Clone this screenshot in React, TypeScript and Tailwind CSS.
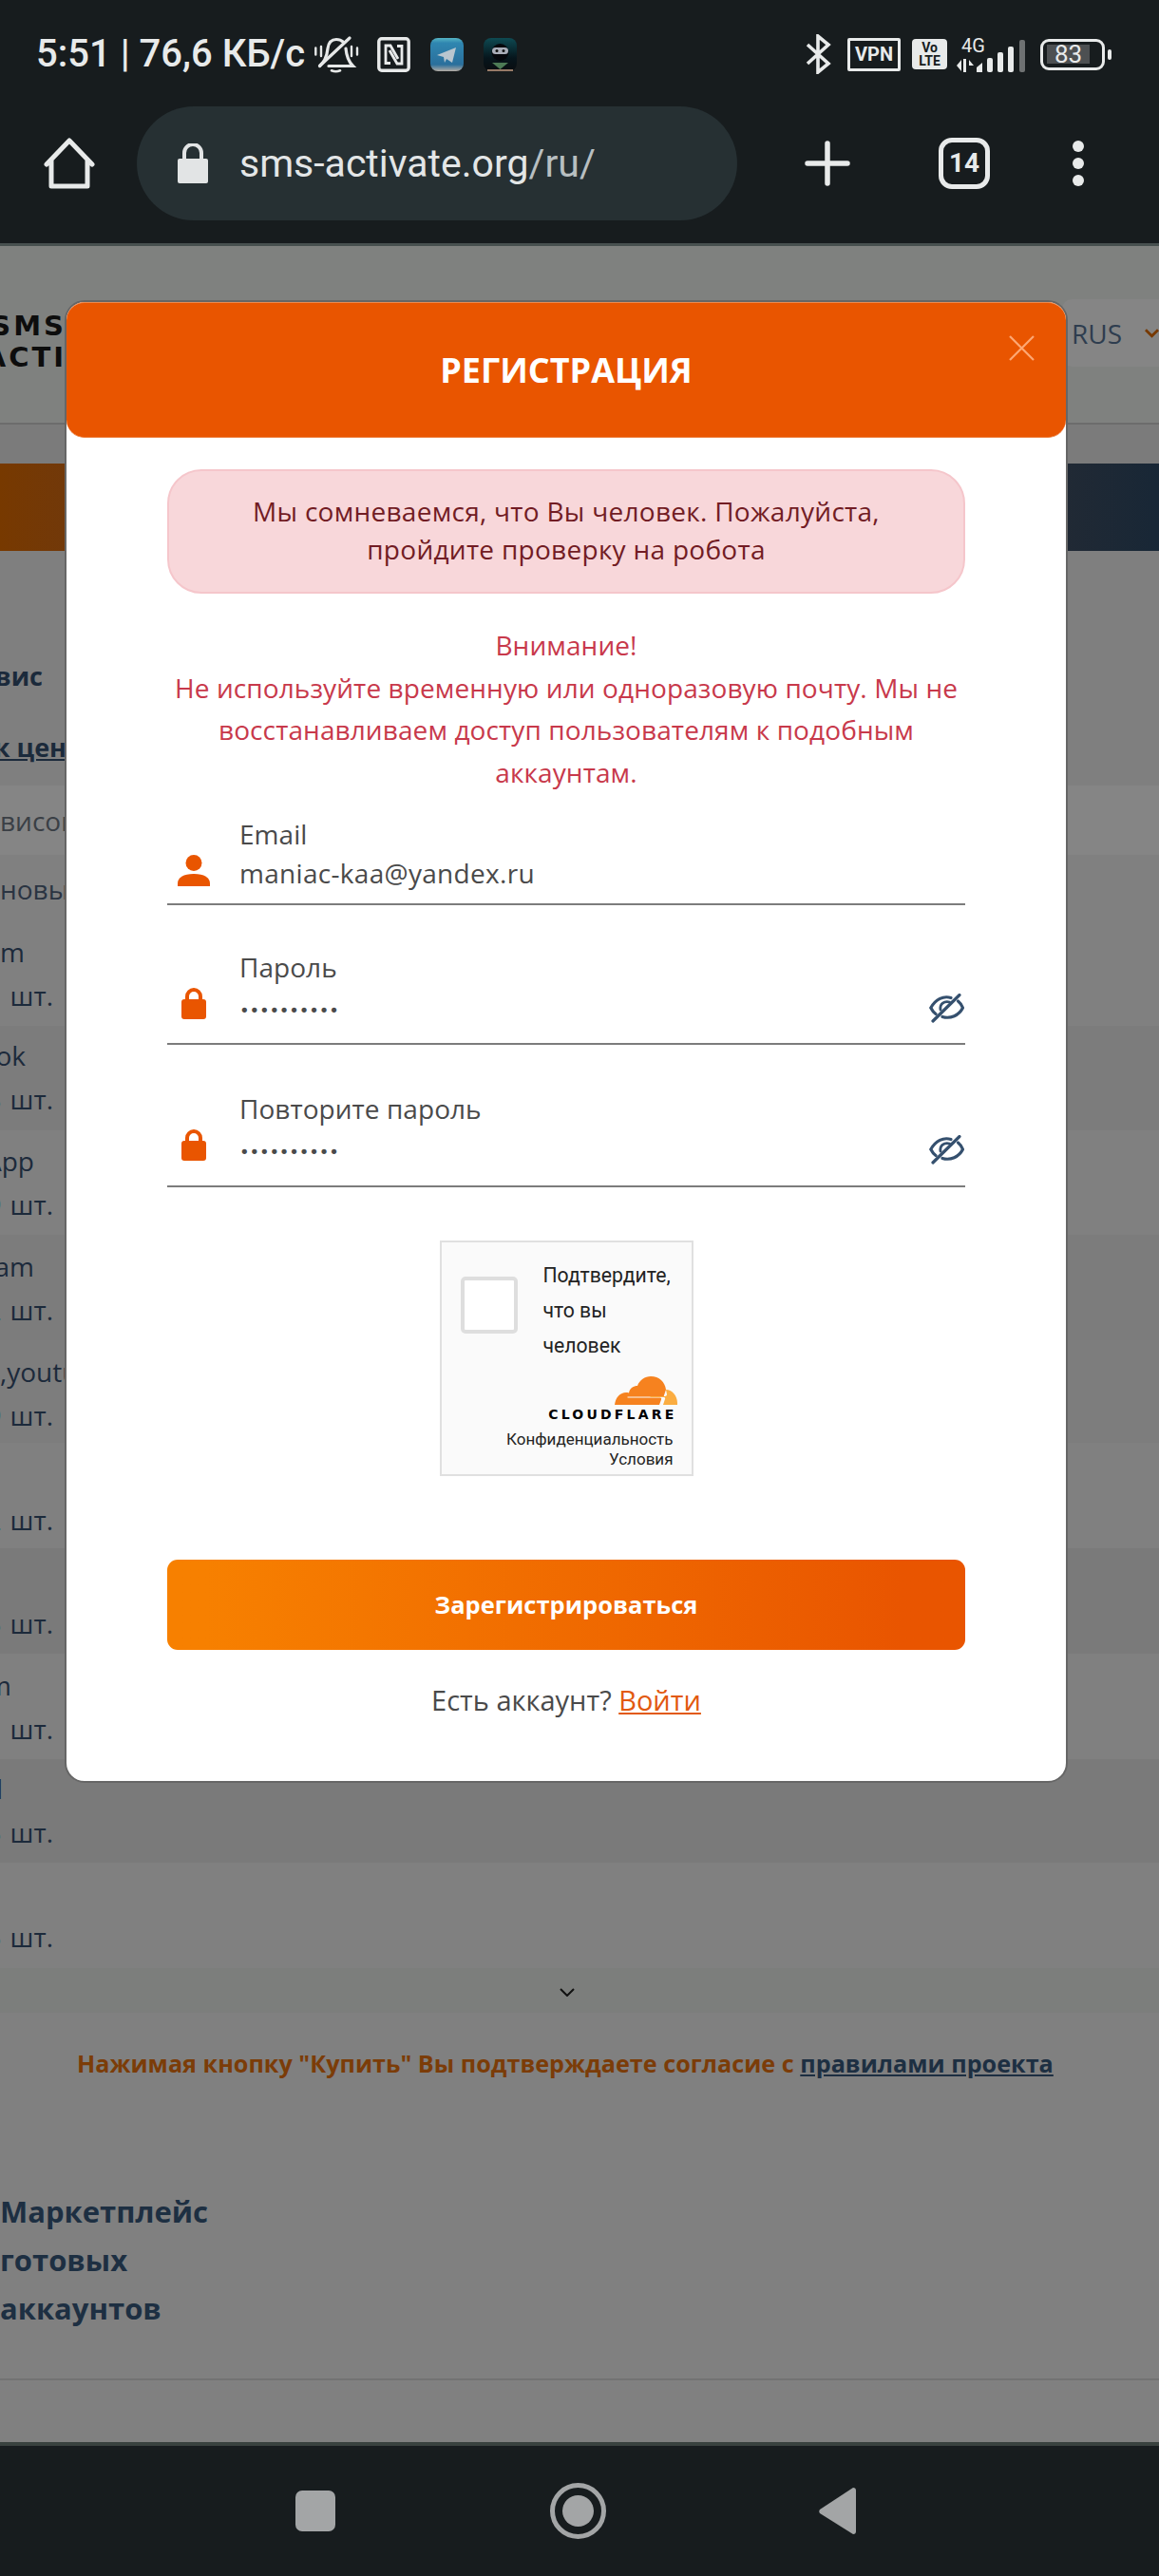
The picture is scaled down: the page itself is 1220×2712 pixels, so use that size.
import React from "react";

const rows = [
  { cls: "h-[108px] pb-[10px] bg-[#808080]", name: "Instagram", nameCls: "w-[26px] justify-end", num: "" },
  { cls: "h-[110px] pb-[11px] bg-[#7c7c7c]", name: "Facebook", nameCls: "w-[27px] justify-end", num: "3" },
  { cls: "h-[110px] pb-[10px] bg-[#808080]", name: "WhatsApp", nameCls: "w-[36px] justify-end", num: "9" },
  { cls: "h-[111px] pb-[10px] bg-[#7c7c7c]", name: "Telegram", nameCls: "w-[36px] justify-end", num: "2" },
  { cls: "h-[108px] pb-[7px] bg-[#7d7d7d]", name: ",youtube", nameCls: "w-[70px] justify-start", num: "9" },
  { cls: "h-[111px] pb-[8px] bg-[#808080]", name: "", nameCls: "", num: "2" },
  { cls: "h-[111px] pb-[10px] bg-[#7a7a7a]", name: "", nameCls: "", num: "5" },
  { cls: "h-[111px] pb-[10px] bg-[#808080]", name: "Steam", nameCls: "w-[12px] justify-end", num: "" },
  { cls: "h-[109px] pb-[10px] bg-[#7a7a7a]", name: "Mail", nameCls: "w-[3px] justify-end", num: "5" },
  { cls: "h-[111px] pb-[11px] bg-[#808080]", name: "", nameCls: "", num: "5" },
];

function BgRow({ r }: { r: (typeof rows)[number] }) {
  return (
    <div className={`flex flex-col justify-end text-[#1c2a3b] text-[28px] leading-[44px] ${r.cls}`}>
      {r.name ? <div className={`flex overflow-hidden whitespace-nowrap leading-[47px] ${r.nameCls}`}>{r.name}</div> : null}
      <div className="flex justify-end w-[56px] whitespace-nowrap">
        <span className="text-[#0c5a3e]">{r.num}</span>
        <span className="ml-[9px]">шт.</span>
      </div>
    </div>
  );
}

function BellOff() {
  return (
    <svg width="48" height="39" viewBox="0 0 48 39" fill="none" stroke="#e6e8e8" strokeWidth="3.2" strokeLinecap="round">
      <path d="M6.500 31.500C10 28 14 24 15 13 16 6 20 3.500 24 3.500c3 0 5 .500 7 2.500" />
      <path d="M34 13c1 11 4 15 7.500 18.500H16" />
      <path d="M38 2 7 31" />
      <path d="M19 36.300q4.500 2 9 0" strokeWidth="2.600" />
      <path d="M2.300 12.500v7M8 11v10M40 11v10M46 12.500v7" strokeWidth="2.400" />
    </svg>
  );
}

function Nfc() {
  return (
    <svg width="35" height="37" viewBox="0 0 35 37" fill="none" stroke="#e8eaea">
      <rect x="1.800" y="1.800" width="31.400" height="33.400" rx="3" strokeWidth="3.400" />
      <path d="M14 27.500H9V9h5l8 14" strokeWidth="2.800" />
      <path d="M21 9.500h5V28h-5l-8-14" strokeWidth="2.800" />
    </svg>
  );
}

function Telegram() {
  return (
    <svg width="35" height="35" viewBox="0 0 35 35">
      <defs>
        <linearGradient id="tg" x1="0" y1="0" x2="0" y2="1">
          <stop offset="0" stopColor="#55b4c4" />
          <stop offset="0.15" stopColor="#2f86b0" />
          <stop offset="0.8" stopColor="#2a6f9c" />
          <stop offset="1" stopColor="#b4aca4" />
        </linearGradient>
      </defs>
      <rect width="35" height="35" rx="8" fill="url(#tg)" />
      <path d="M7 18 27 10 23 26 17 22 15 26 14 20Z" fill="#b9c6cf" />
    </svg>
  );
}

function Ninja() {
  return (
    <svg width="35" height="35" viewBox="0 0 35 35">
      <defs>
        <linearGradient id="nj" x1="0" y1="0" x2="0" y2="1">
          <stop offset="0" stopColor="#0e4a52" />
          <stop offset="0.6" stopColor="#06151c" />
          <stop offset="1" stopColor="#0a0d10" />
        </linearGradient>
      </defs>
      <rect width="35" height="35" rx="8" fill="url(#nj)" />
      <circle cx="17.500" cy="15" r="9" fill="#05070c" />
      <rect x="9" y="10" width="17" height="7" rx="3.500" fill="#a9adb8" />
      <circle cx="14" cy="13.500" r="1.500" fill="#111" />
      <circle cx="21" cy="13.500" r="1.500" fill="#111" />
      <path d="M9 26h17l-8.500 7Z" fill="#4c7a55" />
      <path d="M4 34h27" stroke="#c79f85" strokeWidth="1.500" />
    </svg>
  );
}

function Bluetooth() {
  return (
    <svg width="27" height="42" viewBox="0 0 27 42" fill="none" stroke="#e8eaea" strokeWidth="3.600" strokeLinejoin="miter">
      <path d="M2 11 24 31 13 40V2L24 11 2 31" />
    </svg>
  );
}

function Signal() {
  return (
    <svg width="73" height="35" viewBox="0 0 73 35" fill="#e8eaea">
      <path d="M0 27 5 21V33ZM7 20V34H10V20ZM13 21 18 27 13 27Z" />
      <path d="M21 29 27 24V34H21Z" />
      <rect x="32" y="19" width="6" height="15" rx="2" />
      <rect x="43" y="13" width="6" height="21" rx="2" />
      <rect x="54" y="7" width="6" height="27" rx="2" />
      <rect x="66" y="0" width="6" height="34" rx="2" fill="#6e7172" />
    </svg>
  );
}

function PersonIcon() {
  return (
    <svg width="34" height="33" viewBox="0 0 34 33" fill="#e95500">
      <circle cx="17" cy="8.500" r="8.500" />
      <path d="M0 33V30C0 24 6 20 17 20s17 4 17 10v3Z" />
    </svg>
  );
}

function LockIcon() {
  return (
    <svg width="26" height="33" viewBox="0 0 26 33">
      <rect x="0" y="12" width="26" height="21" rx="3" fill="#e95500" />
      <path d="M6 14V9a7 7 0 0 1 14 0v5" fill="none" stroke="#e95500" strokeWidth="4" />
    </svg>
  );
}

function EyeOff() {
  return (
    <svg width="37" height="31" viewBox="0 0 37 31" fill="none" stroke="#35506e" strokeWidth="3.200" strokeLinecap="round">
      <path d="M23 4.500C15 2 7 6 1.800 15c1.500 3 3 5 5.200 6.500" />
      <path d="M30.500 8c2.500 2 4 4.500 5 7-4 8-13 12-21.500 9.500" />
      <path d="M12 17c-1-6 4-9.500 9.500-8" strokeWidth="2.800" />
      <path d="M32 1.500 4 29" />
    </svg>
  );
}

function CloudLogo() {
  return (
    <svg width="66" height="30" viewBox="0 0 66 30">
      <path d="M0 30C1 22 6 17 12 17c1 0 2 0 3 .500C16 12 20 10 24 10c2-6 8-10 14-10 9 0 15 6 16 14l-2 6c0 1-1 1.500-2 1.500H14c-1 0-1 1 0 1h34c1 0 1.500 1 1 2l-2 5.500Z" fill="#f6821f" />
      <path d="M54 14c6 0 12 6 12 14v2H51l2-6c.500-1 0-2-1-2H38c-1 0-1-1 0-1h15c1 0 2-1 2-2Z" fill="#fbad41" />
    </svg>
  );
}

function Field({ label, value, icon, eye, rowH }: { label: string; value: string; icon: React.ReactNode; eye?: boolean; rowH: string }) {
  return (
    <div className="flex flex-col border-b-2 border-[#7c7c7c]">
      <div className="pl-[76px] text-[28px] leading-[40px] tracking-[0.05px] text-[#4a4a4a]">{label}</div>
      <div className={`flex items-start ${rowH}`}>
        <div className="w-[76px] mt-[2px] flex justify-center pr-[20px]">{icon}</div>
        {eye ? (
          <>
            <div className="flex-1 mt-[17px] text-[#4a4a4a] font-['DejaVu_Sans'] text-[18px] tracking-[-0.15px] leading-[18px]">••••••••••</div>
            <div className="mt-[8px] mr-[1px]"><EyeOff /></div>
          </>
        ) : (
          <div className="flex-1 mt-[1px] text-[28px] tracking-[0.3px] text-[#4a4a4a] leading-[40px]">{value}</div>
        )}
      </div>
    </div>
  );
}

export default function App() {
  return (
    <div className="relative w-[1220px] h-[2712px] overflow-hidden bg-[#808080] font-['Open_Sans',sans-serif]">
      {/* system + browser chrome */}
      <div className="h-[256px] bg-[#171c1e] flex flex-col font-['Roboto',sans-serif]">
        <div className="h-[112px] flex items-center pl-[38px] pr-[50px] pt-[2px]">
          <span className="text-[#e8eaea] text-[40px] font-medium leading-none whitespace-nowrap">5:51 | 76,6 КБ/с</span>
          <div className="ml-[9px]"><BellOff /></div>
          <div className="ml-[19px]"><Nfc /></div>
          <div className="ml-[21px]"><Telegram /></div>
          <div className="ml-[21px]"><Ninja /></div>
          <div className="ml-auto"><Bluetooth /></div>
          <div className="ml-[17px] w-[56px] h-[35px] border-[3px] border-[#e8eaea] rounded-[2px] flex items-center justify-center text-[#e8eaea] text-[20px] font-bold leading-none">VPN</div>
          <div className="ml-[12px] w-[37px] h-[32px] bg-[#e8eaea] rounded-[4px] flex flex-col items-center justify-center text-[#171c1e] text-[14px] font-bold leading-[14px]">
            <span>Vo</span>
            <span>LTE</span>
          </div>
          <div className="relative ml-[10px] w-[73px] h-[35px] mt-[4px]">
            <Signal />
            <span className="absolute left-[5px] -top-[5px] text-[#e8eaea] text-[20px] leading-[22px]">4G</span>
          </div>
          <div className="ml-[15px] w-[68px] h-[33px] border-[3px] border-[#e8eaea] rounded-[9px] flex items-center pl-[4px]">
            <div className="w-[45px] h-[20px] bg-[#4d5052] flex items-center justify-center text-[#e8eaea] text-[26px] leading-none">83</div>
          </div>
          <div className="ml-[3px] w-[4px] h-[11px] bg-[#e8eaea] rounded-[2px]" />
        </div>
        <div className="h-[144px] flex items-start pl-[46px]">
          <svg className="mt-[33px]" width="54" height="54" viewBox="0 0 54 54" fill="none" stroke="#e8eaea" strokeWidth="5" strokeLinejoin="round" strokeLinecap="round">
            <path d="M3 28 27 3l24 25M8 24v27h38V24" />
          </svg>
          <div className="ml-[44px] w-[632px] h-[120px] rounded-[60px] bg-[#263033] flex items-center pl-[43px]">
            <svg width="32" height="42" viewBox="0 0 32 42">
              <rect y="16" width="32" height="26" rx="2" fill="#e2e4e5" />
              <path d="M7 18V10a9 9 0 0 1 18 0v8" fill="none" stroke="#e2e4e5" strokeWidth="4" />
            </svg>
            <span className="ml-[33px] text-[41px] leading-none whitespace-nowrap">
              <span className="text-[#e3e6e7]">sms-activate.org</span>
              <span className="text-[#b8bfc1]">/ru/</span>
            </span>
          </div>
          <svg className="ml-[71px] mt-[36px]" width="48" height="48" viewBox="0 0 48 48" stroke="#e8eaea" strokeWidth="5.500" strokeLinecap="round">
            <path d="M24 3v42M3 24h42" />
          </svg>
          <div className="ml-[93px] mt-[33px] w-[54px] h-[54px] border-[5px] border-[#e8eaea] rounded-[14px] flex items-center justify-center text-[#e8eaea] text-[28px] font-bold leading-none">14</div>
          <div className="ml-[87px] mt-[36px] flex flex-col gap-[6px]">
            <div className="w-[12px] h-[12px] rounded-full bg-[#e8eaea]" />
            <div className="w-[12px] h-[12px] rounded-full bg-[#e8eaea]" />
            <div className="w-[12px] h-[12px] rounded-full bg-[#e8eaea]" />
          </div>
        </div>
      </div>
      <div className="h-[3px] bg-[#47504f]" />

      {/* dimmed page */}
      <div className="h-[188px] bg-[#7f817f] border-b-2 border-[#6c6c6c] flex items-start">
        <div className="w-[70px] mt-[68px] overflow-hidden flex flex-col items-end font-['DejaVu_Sans'] font-bold text-[#0d0d0d] text-[29px] leading-[33px] tracking-[3px] whitespace-nowrap">
          <span>SMS</span>
          <span>ACTI</span>
        </div>
        <div className="ml-auto mt-[56px] w-[102px] h-[71px] bg-[#858585] rounded-l-[10px] flex items-center pl-[10px] text-[#2e3d4f] text-[28px] whitespace-nowrap">
          RUS
          <svg className="ml-[24px]" width="16" height="10" viewBox="0 0 16 10" fill="none" stroke="#773900" strokeWidth="3"><path d="m1 1 7 7 7-7" /></svg>
        </div>
      </div>
      <div className="h-[41px] bg-[#7b7b7b]" />
      <div className="h-[92px] bg-gradient-to-r from-[#773900] to-[#182736]" />
      <div className="h-[247px] bg-[#7f7f7f] flex flex-col font-bold text-[#1b2a3b] text-[27px] whitespace-nowrap">
        <div className="mt-[112px] leading-[40px] flex items-center">
          <span className="w-[45px] flex justify-end overflow-hidden">Сервис</span>
        </div>
        <div className="mt-[35px] leading-[40px] w-[70px] flex justify-end overflow-hidden underline">
          <span>ок цен</span>
        </div>
      </div>
      <div className="h-[73px] bg-[#858585] flex items-center text-[#3a3f45] text-[28px] whitespace-nowrap">
        <div className="w-[70px] flex overflow-hidden">висов</div>
      </div>
      <div className="h-[72px] bg-[#808080] flex items-center text-[#2a3442] text-[28px] whitespace-nowrap">
        <div className="w-[70px] flex overflow-hidden">новые</div>
      </div>
      {rows.map((r, i) => (
        <BgRow key={i} r={r} />
      ))}
      <div className="h-[47px] bg-[#7c7e7c] flex justify-center pt-[21px] pr-[26px]">
        <svg width="16" height="9" viewBox="0 0 16 9" fill="none" stroke="#111" strokeWidth="2"><path d="m1 1 7 7 7-7" /></svg>
      </div>
      <div className="h-[452px] bg-[#808080] flex flex-col">
        <div className="mt-[33px] pl-[81px] text-[25.200px] font-bold leading-[40px] text-[#7b3c08] whitespace-nowrap">
          Нажимая кнопку "Купить" Вы подтверждаете согласие с{" "}
          <span className="text-[#1d2f42] underline">правилами проекта</span>
        </div>
        <div className="mt-[111px] w-[222px] flex flex-col text-[31px] font-bold leading-[51px] text-[#1d2f42] whitespace-nowrap">
          <span>Маркетплейс</span>
          <span>готовых</span>
          <span>аккаунтов</span>
        </div>
        <div className="mt-[48px] h-[2px] bg-[#737373]" />
      </div>

      {/* nav bar */}
      <div className="h-[4px] bg-[#39423f]" />
      <div className="h-[137px] bg-[#171c1e] flex items-center justify-center">
        <div className="w-[42px] h-[43px] rounded-[7px] bg-[#a3a5a6] -ml-[8px]" />
        <div className="ml-[226px] w-[59px] h-[59px] rounded-full border-[5px] border-[#a3a5a6] flex items-center justify-center">
          <div className="w-[33px] h-[33px] rounded-full bg-[#a3a5a6]" />
        </div>
        <svg className="ml-[224px]" width="39" height="49" viewBox="0 0 39 49" fill="#a3a5a6">
          <path d="M36 0c2 0 3 1 3 3v43c0 2-1 3-3 3L1 27c-1-1-1-3 0-4Z" />
        </svg>
      </div>

      {/* modal */}
      <div className="absolute left-[68px] top-[316px] w-[1056px] h-[1561px] rounded-[21px] border-2 border-[#666666] bg-white flex flex-col">
        <div className="relative h-[143px] shrink-0 rounded-[19px] bg-[#e95500] border-y border-[#ed8a4f] flex items-center justify-center text-white text-[36px] font-bold">
          РЕГИСТРАЦИЯ
          <svg className="absolute right-[33px] top-[34px]" width="27" height="27" viewBox="0 0 27 27" stroke="#fda873" strokeWidth="2.200">
            <path d="m1 1 25 25M26 1 1 26" />
          </svg>
        </div>
        <div className="flex flex-col px-[106px]">
          <div className="mt-[33px] h-[131px] rounded-[36px] border-2 border-[#f5c6cb] bg-[#f8d7da] flex items-center justify-center pb-[3px] text-center text-[#721c24] text-[28px] tracking-[0.28px] leading-[40px]">
            <p>
              Мы сомневаемся, что Вы человек. Пожалуйста,
              <br />
              пройдите проверку на робота
            </p>
          </div>
          <p className="mt-[32px] text-center text-[#c8394b] text-[28px] tracking-[0.1px] leading-[44.500px]">
            Внимание!
            <br />
            Не используйте временную или одноразовую почту. Мы не
            <br />
            восстанавливаем доступ пользователям к подобным
            <br />
            аккаунтам.
          </p>
          <div className="mt-[23px]">
            <Field label="Email" value="maniac-kaa@yandex.ru" icon={<PersonIcon />} rowH="h-[53px]" />
          </div>
          <div className="mt-[45px]">
            <Field label="Пароль" value="" icon={<LockIcon />} eye rowH="h-[60px]" />
          </div>
          <div className="mt-[47px]">
            <Field label="Повторите пароль" value="" icon={<LockIcon />} eye rowH="h-[61px]" />
          </div>
          <div className="mt-[56px] self-center w-[267px] h-[248px] border-2 border-[#e0e0e0] bg-[#fafafa] flex flex-col font-['Roboto',sans-serif] text-[#232323]">
            <div className="flex">
              <div className="ml-[20px] mt-[36px] w-[60px] h-[60px] rounded-[5px] border-[4px] border-[#dedede] bg-white" />
              <div className="ml-[27px] mt-[16px] text-[21.200px] leading-[37px]">
                Подтвердите,
                <br />
                что вы
                <br />
                человек
              </div>
            </div>
            <div className="flex flex-col items-end pr-[15px] mt-[14px]">
              <CloudLogo />
              <span className="mt-[3px] font-['DejaVu_Sans'] font-bold text-black text-[14px] leading-[14px] tracking-[3.200px]">CLOUDFLARE</span>
              <span className="mt-[9px] mr-[4px] text-[17px] leading-[21px]">Конфиденциальность</span>
              <span className="mr-[4px] text-[17px] leading-[21px]">Условия</span>
            </div>
          </div>
          <button className="mt-[88px] h-[95px] rounded-[11px] bg-gradient-to-r from-[#f78000] from-[5%] to-[#e95500] to-[92%] text-white text-[25.500px] font-bold">
            Зарегистрироваться
          </button>
          <div className="mt-[33px] text-center text-[29px] leading-[40px] text-[#4a4a4a]">
            Есть аккаунт? <span className="text-[#e2590f] underline">Войти</span>
          </div>
        </div>
      </div>
    </div>
  );
}
